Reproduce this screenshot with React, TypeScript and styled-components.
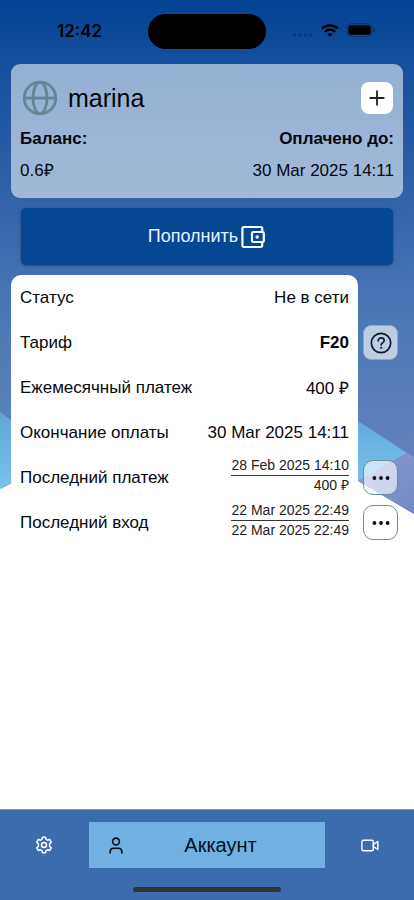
import React from "react";
import styled, { createGlobalStyle } from "styled-components";

const GlobalStyle = createGlobalStyle`
  *, *::before, *::after { box-sizing: border-box; }
  body { margin: 0; background: #fff; }
  button, dl, dd, h1 { margin: 0; padding: 0; }
  button { font: inherit; cursor: pointer; }
`;

const Screen = styled.div`
  position: relative;
  isolation: isolate;
  display: flex;
  flex-direction: column;
  min-height: 100vh;
  color: #05080c;
  font-family: "Liberation Sans", Arial, sans-serif;
  font-size: 17px;
`;

const Backdrop = styled.svg`
  position: absolute;
  z-index: -1;
  top: 0;
  left: 0;
  width: 100%;
  height: 520px;
`;

const StatusBar = styled.header`
  display: grid;
  grid-template-columns: 1fr 118px 1fr;
  align-items: center;
  height: 64px;
  padding: 0 11px 2px;
  color: #000;
`;

const Clock = styled.time`
  font: 600 17px/20px Inter, sans-serif;
  text-align: center;
`;

const Island = styled.div`
  height: 35px;
  border-radius: 18px;
  background: #000;
`;

const Signals = styled.div`
  display: flex;
  align-items: center;
  justify-content: center;
  gap: 7px;
  padding: 0 1px 2px 0;
  svg { display: block; }
`;

const Main = styled.main`
  flex: 1;
`;

const Summary = styled.section`
  margin: 0 11px;
  padding: 16px 9px 15px;
  border-radius: 9px;
  background: rgba(255, 255, 255, 0.55);
`;

const SummaryHead = styled.div`
  display: flex;
  align-items: center;
  gap: 10px;
  height: 36px;
  margin-bottom: 11px;
  padding: 0 1px 0 2px;
`;

const UserName = styled.h1`
  flex: 1;
  font-size: 25px;
  font-weight: 400;
  line-height: 34px;
`;

const AddButton = styled.button`
  display: grid;
  place-items: center;
  width: 32px;
  height: 32px;
  border: 0;
  border-radius: 8px;
  background: #fff;
  color: #222;
`;

const SummaryFacts = styled.dl`
  display: flex;
  justify-content: space-between;
`;

const SummaryFact = styled.div<{ $end?: boolean }>`
  text-align: ${(p) => (p.$end ? "right" : "left")};
  dt { font-weight: 700; line-height: 24px; margin-bottom: 8px; }
  dd { line-height: 24px; }
`;

const TopUpButton = styled.button`
  display: flex;
  align-items: center;
  justify-content: center;
  gap: 2px;
  width: calc(100% - 42px);
  height: 57px;
  margin: 10px 21px;
  border: 0;
  border-radius: 5px;
  background: #064793;
  color: #e6f2ff;
  font-size: 18px;
  box-shadow: 0 1px 3px rgba(0, 0, 0, 0.35);
`;

const Details = styled.section`
  display: flex;
  gap: 5px;
  padding: 0 16px 0 11px;
`;

const DetailsCard = styled.dl`
  flex: 1;
  min-width: 0;
  padding: 0 9px;
  border-radius: 10px;
  background: #fff;
`;

const DetailRow = styled.div`
  display: flex;
  align-items: center;
  justify-content: space-between;
  height: 45px;
`;

const DetailValue = styled.dd<{ $bold?: boolean }>`
  font-weight: ${(p) => (p.$bold ? 700 : 400)};
`;

const Stacked = styled.dd`
  padding-bottom: 4px;
  color: #222;
  font-size: 14px;
  line-height: 19px;
  text-align: right;
  span { display: block; }
  span + span { border-top: 1px solid #333; }
`;

const Actions = styled.div`
  display: grid;
  grid-auto-rows: 45px;
  align-items: center;
`;

const ActionButton = styled.button<{ $row: number; $outlined?: boolean }>`
  grid-row: ${(p) => p.$row};
  display: grid;
  place-items: center;
  width: 35px;
  height: 35px;
  border: 1px solid ${(p) => (p.$outlined ? "#6b8c9b" : "#91a5bd")};
  border-radius: ${(p) => (p.$outlined ? 10 : 8)}px;
  background: rgba(255, 255, 255, 0.62);
  color: #111a28;
`;

const BottomBar = styled.footer`
  height: 91px;
  padding-top: 12px;
  border-top: 1px solid #7d95b8;
  background: #3b6cae;
`;

const Tabs = styled.nav`
  display: grid;
  grid-template-columns: 3fr 8fr 3fr;
  height: 46px;
`;

const Tab = styled.button<{ $active?: boolean }>`
  display: grid;
  grid-template-columns: ${(p) => (p.$active ? "54px 1fr" : "1fr")};
  place-items: center;
  border: 0;
  background: ${(p) => (p.$active ? "#70b0e3" : "transparent")};
  color: ${(p) => (p.$active ? "#03101c" : "#fff")};
  font-size: 20px;
  span { padding-right: 27px; }
`;

const HomeIndicator = styled.div`
  width: 148px;
  height: 5px;
  margin: 19px auto 0;
  border-radius: 3px;
  background: #333337;
`;

const BackdropArt = () => (
  <Backdrop viewBox="0 0 414 520" preserveAspectRatio="none" aria-hidden="true">
    <defs>
      <linearGradient id="sky" x1="0" y1="0" x2="0" y2="1">
        <stop offset="0" stopColor="#034393" />
        <stop offset="0.12" stopColor="#134f9c" />
        <stop offset="0.38" stopColor="#3163a9" />
        <stop offset="0.62" stopColor="#4c79b7" />
        <stop offset="1" stopColor="#6a86be" />
      </linearGradient>
      <linearGradient id="ice" x1="0" y1="0" x2="0" y2="1">
        <stop offset="0" stopColor="#60a6dc" />
        <stop offset="1" stopColor="#78c2eb" />
      </linearGradient>
      <linearGradient id="lilac" x1="0" y1="0" x2="1" y2="1">
        <stop offset="0" stopColor="#929bd0" />
        <stop offset="1" stopColor="#7089c5" />
      </linearGradient>
    </defs>
    <path d="M0 0H414V514L358 481L300 440H100L0 489Z" fill="url(#sky)" />
    <path d="M0 412L60 457L0 489Z" fill="url(#ice)" />
    <path d="M340 409L358 421L407 453L358 481L340 470Z" fill="url(#ice)" />
    <path d="M407 453L414 457V514L358 481Z" fill="url(#lilac)" />
  </Backdrop>
);

const Wifi = () => (
  <svg width="18" height="13" viewBox="0 0 18 13" fill="none" stroke="#000" strokeWidth="2.3" aria-hidden="true">
    <path d="M.9 4.8a11.6 11.6 0 0 1 16.2 0M3.8 7.8a7.5 7.5 0 0 1 10.4 0" />
    <path d="M6.2 10.3a4 4 0 0 1 5.6 0L9 13Z" fill="#000" stroke="none" />
  </svg>
);

const Battery = () => (
  <svg width="30" height="14" viewBox="0 0 30 14" aria-hidden="true">
    <rect x=".7" y=".7" width="25.6" height="12.6" rx="4" fill="none" stroke="#0a3265" strokeWidth="1" />
    <rect x="2.3" y="2.3" width="22.4" height="9.4" rx="2.6" fill="#000" />
    <path d="M27.7 5v4.4c1.9-.7 1.9-3.7 0-4.4Z" fill="#082b59" />
  </svg>
);

const Dots = () => (
  <svg width="22" height="13" viewBox="0 0 22 13" fill="#0b397a" aria-hidden="true">
    <circle cx="2.5" cy="11" r="1.8" /><circle cx="8" cy="11" r="1.8" />
    <circle cx="13.5" cy="11" r="1.8" /><circle cx="19" cy="11" r="1.8" />
  </svg>
);

const Globe = () => (
  <svg width="36" height="36" viewBox="0 0 36 36" fill="none" stroke="#648795" strokeWidth="2.8" aria-hidden="true">
    <circle cx="18" cy="18" r="15.8" />
    <ellipse cx="18" cy="18" rx="7" ry="15.8" />
    <path d="M2.2 18h31.6" />
  </svg>
);

const Plus = () => (
  <svg width="16" height="16" viewBox="0 0 16 16" stroke="currentColor" strokeWidth="1.8" aria-hidden="true">
    <path d="M8 .6v14.8M.6 8h14.8" />
  </svg>
);

const Wallet = () => (
  <svg width="26" height="24" viewBox="0 0 26 24" fill="none" stroke="#fff" strokeWidth="2.2" strokeLinejoin="round" aria-hidden="true">
    <path d="M22.2 6.5V3.4a1.4 1.4 0 0 0-1.4-1.4h-17A1.4 1.4 0 0 0 2.4 3.4v17.2A1.4 1.4 0 0 0 3.8 22h17a1.4 1.4 0 0 0 1.4-1.4v-3.1" />
    <rect x="12" y="7" width="11.8" height="10" rx="1.2" />
    <circle cx="17.2" cy="12" r="1.8" fill="#fff" stroke="none" />
  </svg>
);

const Help = () => (
  <svg width="22" height="22" viewBox="0 0 22 22" fill="none" stroke="currentColor" strokeWidth="1.7" strokeLinecap="round" aria-hidden="true">
    <circle cx="11" cy="11" r="9.7" />
    <path d="M8.2 8.8c0-4.1 6-3.6 6-.2 0 2.3-3.1 2.2-3.1 4.4" />
    <circle cx="11.1" cy="15.8" r=".6" fill="currentColor" strokeWidth="1" />
  </svg>
);

const More = () => (
  <svg width="18" height="4" viewBox="0 0 18 4" fill="#080c12" aria-hidden="true">
    <circle cx="2.4" cy="2" r="1.9" /><circle cx="9" cy="2" r="1.9" /><circle cx="15.6" cy="2" r="1.9" />
  </svg>
);

const Gear = () => (
  <svg width="18" height="18" viewBox="0 0 18 18" fill="none" stroke="currentColor" strokeWidth="1.5" strokeLinejoin="round" aria-hidden="true">
    <path d="M7.5 1.2h3l.6 2.2 1.4.8 2.2-.7 1.5 2.6-1.6 1.6v2.6l1.6 1.6-1.5 2.6-2.2-.7-1.4.8-.6 2.2h-3l-.6-2.2-1.4-.8-2.2.7-1.5-2.6 1.6-1.6V7.7L1.8 6.1l1.5-2.6 2.2.7 1.4-.8Z" />
    <circle cx="9" cy="9" r="2.5" />
  </svg>
);

const Person = () => (
  <svg width="14" height="17" viewBox="0 0 14 17" fill="none" stroke="currentColor" strokeWidth="1.6" strokeLinecap="round" aria-hidden="true">
    <circle cx="7" cy="4.5" r="3.4" />
    <path d="M1.2 16v-1.6a3.4 3.4 0 0 1 3.4-3.2h4.8a3.4 3.4 0 0 1 3.4 3.2V16" />
  </svg>
);

const Camera = () => (
  <svg width="18" height="13" viewBox="0 0 18 13" fill="none" stroke="currentColor" strokeWidth="1.4" strokeLinejoin="round" aria-hidden="true">
    <rect x=".9" y="1.2" width="11.4" height="10.6" rx="1.6" />
    <path d="M12.3 5.3l4.6-2.7v7.8l-4.6-2.7Z" />
  </svg>
);

export default function App() {
  return (
    <Screen>
      <GlobalStyle />
      <BackdropArt />
      <StatusBar>
        <Clock>12:42</Clock>
        <Island />
        <Signals><Dots /><Wifi /><Battery /></Signals>
      </StatusBar>
      <Main>
        <Summary>
          <SummaryHead>
            <Globe />
            <UserName>marina</UserName>
            <AddButton aria-label="Добавить"><Plus /></AddButton>
          </SummaryHead>
          <SummaryFacts>
            <SummaryFact><dt>Баланс:</dt><dd>0.6₽</dd></SummaryFact>
            <SummaryFact $end><dt>Оплачено до:</dt><dd>30 Mar 2025 14:11</dd></SummaryFact>
          </SummaryFacts>
        </Summary>
        <TopUpButton>Пополнить<Wallet /></TopUpButton>
        <Details>
          <DetailsCard>
            <DetailRow><dt>Статус</dt><DetailValue>Не в сети</DetailValue></DetailRow>
            <DetailRow><dt>Тариф</dt><DetailValue $bold>F20</DetailValue></DetailRow>
            <DetailRow><dt>Ежемесячный платеж</dt><DetailValue>400 ₽</DetailValue></DetailRow>
            <DetailRow><dt>Окончание оплаты</dt><DetailValue>30 Mar 2025 14:11</DetailValue></DetailRow>
            <DetailRow><dt>Последний платеж</dt><Stacked><span>28 Feb 2025 14:10</span><span>400 ₽</span></Stacked></DetailRow>
            <DetailRow><dt>Последний вход</dt><Stacked><span>22 Mar 2025 22:49</span><span>22 Mar 2025 22:49</span></Stacked></DetailRow>
          </DetailsCard>
          <Actions>
            <ActionButton $row={2} aria-label="О тарифе"><Help /></ActionButton>
            <ActionButton $row={5} $outlined aria-label="Все платежи"><More /></ActionButton>
            <ActionButton $row={6} $outlined aria-label="Все входы"><More /></ActionButton>
          </Actions>
        </Details>
      </Main>
      <BottomBar>
        <Tabs>
          <Tab aria-label="Настройки"><Gear /></Tab>
          <Tab $active aria-current="page"><Person /><span>Аккаунт</span></Tab>
          <Tab aria-label="Камеры"><Camera /></Tab>
        </Tabs>
        <HomeIndicator />
      </BottomBar>
    </Screen>
  );
}
